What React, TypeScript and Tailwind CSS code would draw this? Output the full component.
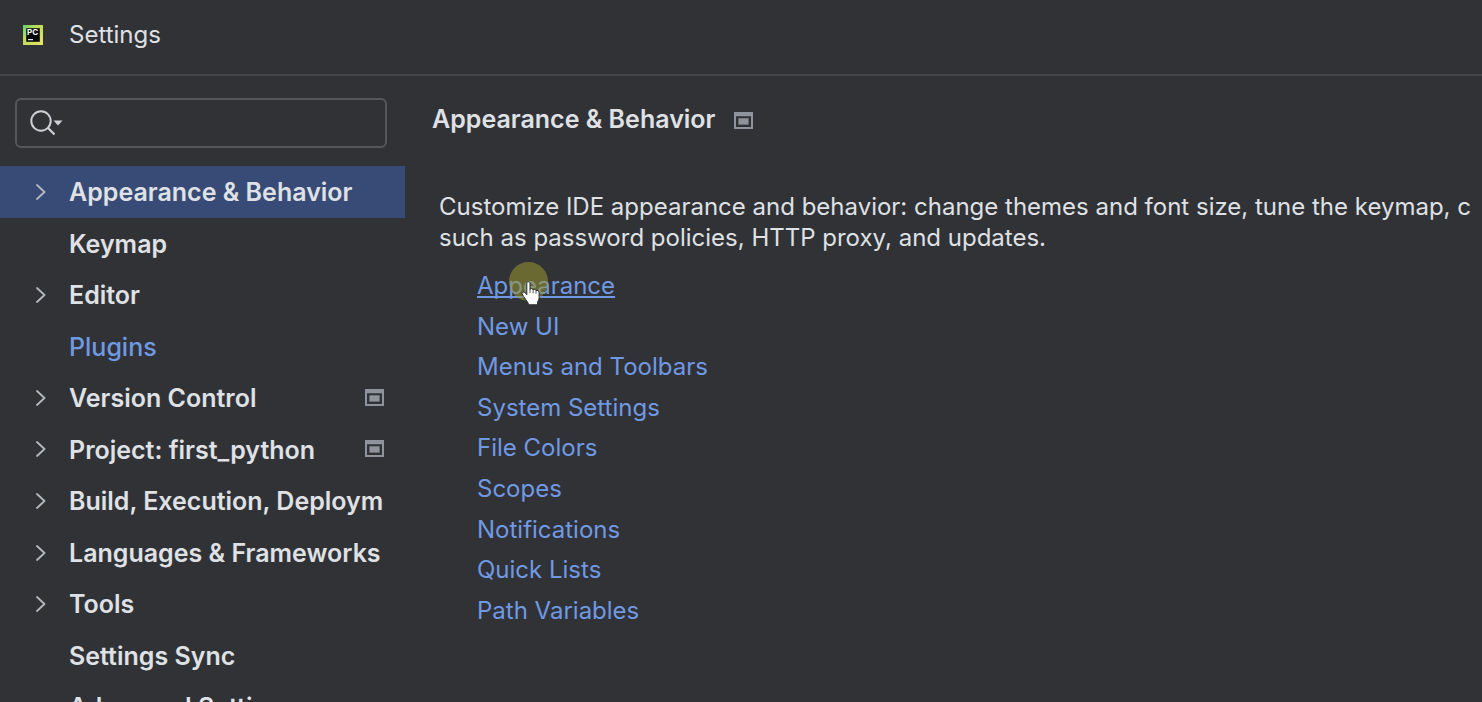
import { useState } from "react";

type Category = {
  label: string;
  expandable?: boolean;
  projectLevel?: boolean;
  accent?: boolean;
};

const categories: Category[] = [
  { label: "Appearance & Behavior", expandable: true },
  { label: "Keymap" },
  { label: "Editor", expandable: true },
  { label: "Plugins", accent: true },
  { label: "Version Control", expandable: true, projectLevel: true },
  { label: "Project: first_python", expandable: true, projectLevel: true },
  { label: "Build, Execution, Deployment", expandable: true },
  { label: "Languages & Frameworks", expandable: true },
  { label: "Tools", expandable: true },
  { label: "Settings Sync" },
  { label: "Advanced Settings" },
];

const links = [
  "Appearance",
  "New UI",
  "Menus and Toolbars",
  "System Settings",
  "File Colors",
  "Scopes",
  "Notifications",
  "Quick Lists",
  "Path Variables",
];

function PyCharmLogo() {
  return (
    <svg viewBox="0 0 20 20" className="size-5 shrink-0" aria-hidden="true">
      <defs>
        <linearGradient id="pc" x1="0" y1="0" x2="1" y2="1">
          <stop offset="0" stopColor="#5fd06c" />
          <stop offset="0.35" stopColor="#b8dc58" />
          <stop offset="1" stopColor="#e9e565" />
        </linearGradient>
      </defs>
      <rect width="20" height="20" fill="url(#pc)" />
      <rect x="3.2" y="3.2" width="13.6" height="13.6" fill="#08090a" />
      <text x="4" y="10.3" fontSize="8" fontWeight="700" fill="#ffffff" fontFamily="Inter, sans-serif">
        PC
      </text>
      <rect x="5" y="14" width="5" height="1.2" fill="#e6e6e6" />
    </svg>
  );
}

function SearchIcon() {
  return (
    <svg viewBox="0 0 34 26" className="h-[26px] w-[34px] shrink-0" fill="none" aria-hidden="true">
      <circle cx="11" cy="11" r="9.7" stroke="#ced0d6" strokeWidth="2" />
      <path d="M17.8 17.8 24.5 24.5" stroke="#ced0d6" strokeWidth="2.2" />
      <path d="M23.5 10.5h9L28 15.5z" fill="#ced0d6" />
    </svg>
  );
}

function Chevron() {
  return (
    <svg viewBox="0 0 10 16" className="h-4 w-[10px]" fill="none" aria-hidden="true">
      <path d="M1 1 8.5 8 1 15" stroke="#b4b8bf" strokeWidth="1.8" strokeLinecap="round" strokeLinejoin="round" />
    </svg>
  );
}

function ProjectIcon() {
  return (
    <svg viewBox="0 0 19 17" className="h-[17px] w-[19px] shrink-0" aria-hidden="true">
      <path fillRule="evenodd" fill="#8f949c" d="M0 0h19v17H0zM2 4.2v10.8h15V4.2z" />
      <rect x="4.4" y="6.3" width="10.2" height="6.3" fill="#8f949c" />
    </svg>
  );
}

function HandPointer() {
  return (
    <svg viewBox="0 0 20 26" className="absolute left-[44px] top-[15px] h-[26px] w-5" aria-hidden="true">
      <path
        d="M5.8 2.4c0-2.2 3.2-2.2 3.2 0v6c.6-1.2 2.9-1 3.1.5.8-1 2.8-.6 2.9.8 1.1-.7 3.1-.1 3.1 1.6v5.5c0 2-1.6 3.4-1.6 5.4v1.6H7.3v-1.5C6 19.8 3.9 17.9 2.6 15.5 1.2 13.3.4 12 1.5 11.3c1.4-.9 2.9.8 4.3 2.4z"
        fill="#ffffff"
        stroke="#26262a"
        strokeWidth="1"
      />
      <path d="M9 8v4M12.1 9v3.4M15 10v2.8" stroke="#4a4a50" strokeWidth="0.9" />
    </svg>
  );
}

export default function App() {
  const [selected, setSelected] = useState(categories[0].label);

  return (
    <div className="flex h-screen flex-col overflow-hidden bg-[#313236] font-['Inter',sans-serif] text-[#dfe1e5]">
      <header className="flex h-[76px] shrink-0 items-center gap-[26px] border-b-2 border-[#434549] px-[23px] pb-1">
        <PyCharmLogo />
        <h1 className="text-2xl">Settings</h1>
      </header>

      <div className="flex min-h-0 flex-1">
        <aside className="w-[405px] shrink-0 overflow-hidden pt-[22px]">
          <label className="ml-[15px] mr-[18px] flex h-[50px] items-center gap-2 rounded-md border-2 border-[#55575b] pl-[13px] pr-3 focus-within:border-[#3574f0]">
            <SearchIcon />
            <input type="text" aria-label="Search settings" className="w-full min-w-0 bg-transparent text-2xl outline-none" />
          </label>

          <nav className="mt-[18px] grid h-[567px] auto-rows-fr grid-cols-1" aria-label="Settings categories">
            {categories.map(({ label, expandable, projectLevel, accent }) => (
              <button
                key={label}
                type="button"
                onClick={() => setSelected(label)}
                className={`flex w-full min-w-0 items-center pl-9 pr-[21px] pt-0.5 text-left text-[25px] ${
                  selected === label ? "bg-[#384b77]" : ""
                } ${accent ? "font-medium text-[#7099e4]" : "font-semibold"}`}
              >
                <span className="w-[33px] shrink-0 pb-0.5">{expandable && <Chevron />}</span>
                <span className="min-w-0 flex-1 overflow-hidden whitespace-nowrap">{label}</span>
                {projectLevel && (
                  <span className="pb-[3px]">
                    <ProjectIcon />
                  </span>
                )}
              </button>
            ))}
          </nav>
        </aside>

        <main className="min-w-0 flex-1 overflow-hidden pl-[27px] pt-7">
          <div className="flex h-8 items-center gap-[18px]">
            <h2 className="text-[25px] font-semibold">Appearance &amp; Behavior</h2>
            <ProjectIcon />
          </div>

          <p className="mr-[11px] mt-[55px] overflow-hidden whitespace-nowrap pl-[7px] text-2xl leading-[31px]">
            Customize IDE appearance and behavior: change themes and font size, tune the keymap, configure plugins
            <br />
            such as password policies, HTTP proxy, and updates.
          </p>

          <ul className="mt-[13px] grid h-[365px] auto-rows-fr pl-[45px] text-2xl text-[#7099e4]">
            {links.map((link, index) => (
              <li key={link} className="relative flex items-center">
                <a
                  href="#"
                  className={
                    index === 0
                      ? "underline decoration-2 underline-offset-2 [text-decoration-skip-ink:none]"
                      : "hover:underline"
                  }
                >
                  {link}
                </a>
                {index === 0 && (
                  <span className="pointer-events-none absolute inset-0">
                    <span className="absolute -top-1 left-8 size-[39px] rounded-full bg-[#9a9830]/55" />
                    <HandPointer />
                  </span>
                )}
              </li>
            ))}
          </ul>
        </main>
      </div>
    </div>
  );
}
